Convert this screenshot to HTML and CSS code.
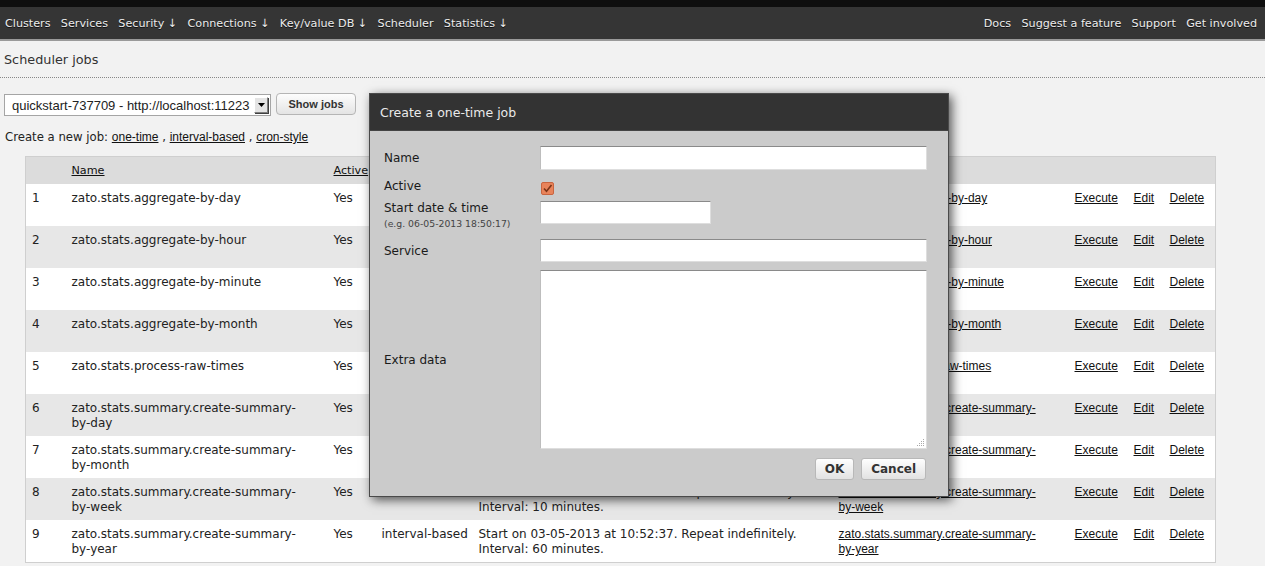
FILE: index.html
```html
<!DOCTYPE html>
<html>
<head>
<meta charset="utf-8">
<title>Scheduler jobs</title>
<link rel="stylesheet" href="styles.css">
</head>
<body>
<div class="topstrip"></div>
<nav class="nav">
  <ul class="nav-left">
    <li>Clusters</li>
    <li>Services</li>
    <li>Security ↓</li>
    <li>Connections ↓</li>
    <li>Key/value DB ↓</li>
    <li>Scheduler</li>
    <li>Statistics ↓</li>
  </ul>
  <ul class="nav-right">
    <li>Docs</li>
    <li>Suggest a feature</li>
    <li>Support</li>
    <li>Get involved</li>
  </ul>
</nav>
<header class="page-title">Scheduler jobs</header>
<main class="content">
  <div class="cluster-row">
    <div class="select">
      <span class="select-text">quickstart-737709 - http://localhost:11223</span>
      <span class="select-arrow"><svg width="7" height="4" viewBox="0 0 7 4"><path d="M0 0h7L3.5 4z" fill="#000"/></svg></span>
    </div>
    <button class="btn-show">Show jobs</button>
  </div>
  <p class="create">Create a new job: <a href="#">one-time</a> , <a href="#">interval-based</a> , <a href="#">cron-style</a></p>
  <table class="jobs">
    <colgroup>
      <col class="c-idx"><col class="c-name"><col class="c-active"><col class="c-type"><col class="c-def"><col class="c-svc"><col class="c-exe"><col class="c-edit"><col class="c-del">
    </colgroup>
    <thead>
      <tr><th></th><th class="t-name"><a href="#">Name</a></th><th><a href="#">Active</a></th><th class="t-type"><a href="#">Job type</a></th><th>Definition</th><th class="t-svc"><a href="#">Service</a></th><th></th><th></th><th></th></tr>
    </thead>
    <tbody>
      <tr><td>1</td><td class="t-name">zato.stats.aggregate-by-day</td><td>Yes</td><td class="t-type">interval-based</td><td>Start on 03-05-2013 at 10:52:37. Repeat indefinitely.<br>Interval: 60 minutes.</td><td class="t-svc"><a class="lk" href="#">zato.stats.aggregate-by-day</a></td><td><a class="lk" href="#">Execute</a></td><td><a class="lk" href="#">Edit</a></td><td><a class="lk" href="#">Delete</a></td></tr>
      <tr><td>2</td><td class="t-name">zato.stats.aggregate-by-hour</td><td>Yes</td><td class="t-type">interval-based</td><td>Start on 03-05-2013 at 10:52:37. Repeat indefinitely.<br>Interval: 10 minutes.</td><td class="t-svc"><a class="lk" href="#">zato.stats.aggregate-by-hour</a></td><td><a class="lk" href="#">Execute</a></td><td><a class="lk" href="#">Edit</a></td><td><a class="lk" href="#">Delete</a></td></tr>
      <tr><td>3</td><td class="t-name">zato.stats.aggregate-by-minute</td><td>Yes</td><td class="t-type">interval-based</td><td>Start on 03-05-2013 at 10:52:37. Repeat indefinitely.<br>Interval: 1 minutes.</td><td class="t-svc"><a class="lk" href="#">zato.stats.aggregate-by-minute</a></td><td><a class="lk" href="#">Execute</a></td><td><a class="lk" href="#">Edit</a></td><td><a class="lk" href="#">Delete</a></td></tr>
      <tr><td>4</td><td class="t-name">zato.stats.aggregate-by-month</td><td>Yes</td><td class="t-type">interval-based</td><td>Start on 03-05-2013 at 10:52:37. Repeat indefinitely.<br>Interval: 60 minutes.</td><td class="t-svc"><a class="lk" href="#">zato.stats.aggregate-by-month</a></td><td><a class="lk" href="#">Execute</a></td><td><a class="lk" href="#">Edit</a></td><td><a class="lk" href="#">Delete</a></td></tr>
      <tr><td>5</td><td class="t-name">zato.stats.process-raw-times</td><td>Yes</td><td class="t-type">interval-based</td><td>Start on 03-05-2013 at 10:52:37. Repeat indefinitely.<br>Interval: 90 seconds.</td><td class="t-svc"><a class="lk" href="#">zato.stats.process-raw-times</a></td><td><a class="lk" href="#">Execute</a></td><td><a class="lk" href="#">Edit</a></td><td><a class="lk" href="#">Delete</a></td></tr>
      <tr><td>6</td><td class="t-name">zato.stats.summary.create-summary-by-day</td><td>Yes</td><td class="t-type">interval-based</td><td>Start on 03-05-2013 at 10:52:37. Repeat indefinitely.<br>Interval: 10 minutes.</td><td class="t-svc"><a class="lk" href="#">zato.stats.summary.create-summary-by-day</a></td><td><a class="lk" href="#">Execute</a></td><td><a class="lk" href="#">Edit</a></td><td><a class="lk" href="#">Delete</a></td></tr>
      <tr><td>7</td><td class="t-name">zato.stats.summary.create-summary-by-month</td><td>Yes</td><td class="t-type">interval-based</td><td>Start on 03-05-2013 at 10:52:37. Repeat indefinitely.<br>Interval: 60 minutes.</td><td class="t-svc"><a class="lk" href="#">zato.stats.summary.create-summary-by-month</a></td><td><a class="lk" href="#">Execute</a></td><td><a class="lk" href="#">Edit</a></td><td><a class="lk" href="#">Delete</a></td></tr>
      <tr><td>8</td><td class="t-name">zato.stats.summary.create-summary-by-week</td><td>Yes</td><td class="t-type">interval-based</td><td>Start on 03-05-2013 at 10:52:37. Repeat indefinitely.<br>Interval: 10 minutes.</td><td class="t-svc"><a class="lk" href="#">zato.stats.summary.create-summary-by-week</a></td><td><a class="lk" href="#">Execute</a></td><td><a class="lk" href="#">Edit</a></td><td><a class="lk" href="#">Delete</a></td></tr>
      <tr><td>9</td><td class="t-name">zato.stats.summary.create-summary-by-year</td><td>Yes</td><td class="t-type">interval-based</td><td>Start on 03-05-2013 at 10:52:37. Repeat indefinitely.<br>Interval: 60 minutes.</td><td class="t-svc"><a class="lk" href="#">zato.stats.summary.create-summary-by-year</a></td><td><a class="lk" href="#">Execute</a></td><td><a class="lk" href="#">Edit</a></td><td><a class="lk" href="#">Delete</a></td></tr>
    </tbody>
  </table>
</main>

<div class="dialog">
  <div class="dialog-title">Create a one-time job</div>
  <div class="dialog-body">
    <div class="frow r-name">
      <label class="flabel">Name</label>
      <input class="inp wide" type="text">
    </div>
    <div class="frow r-active">
      <label class="flabel">Active</label>
      <span class="check"><svg width="13" height="13" viewBox="0 0 13 13"><rect x="0.5" y="0.5" width="12" height="12" rx="1.5" fill="#e8835a" stroke="#c8643f"/><path d="M3 6.5l2.5 2.8L10.5 3" fill="none" stroke="#7a3418" stroke-width="1.6"/></svg></span>
    </div>
    <div class="frow r-start">
      <label class="flabel">Start date &amp; time<span class="hint">(e.g. 06-05-2013 18:50:17)</span></label>
      <input class="inp short" type="text">
    </div>
    <div class="frow r-service">
      <label class="flabel">Service</label>
      <input class="inp wide" type="text">
    </div>
    <div class="frow r-extra">
      <label class="flabel">Extra data</label>
      <div class="ta-wrap">
        <textarea class="ta"></textarea>
        <svg class="grip" width="9" height="9" viewBox="0 0 9 9"><g fill="#aaa"><rect x="7" y="1" width="1" height="1"/><rect x="5" y="3" width="1" height="1"/><rect x="7" y="3" width="1" height="1"/><rect x="3" y="5" width="1" height="1"/><rect x="5" y="5" width="1" height="1"/><rect x="7" y="5" width="1" height="1"/><rect x="1" y="7" width="1" height="1"/><rect x="3" y="7" width="1" height="1"/><rect x="5" y="7" width="1" height="1"/><rect x="7" y="7" width="1" height="1"/></g></svg>
      </div>
    </div>
    <div class="buttons">
      <button class="dbtn">OK</button>
      <button class="dbtn">Cancel</button>
    </div>
  </div>
</div>
</body>
</html>
```

FILE: styles.css
```css
html, body {
  margin: 0;
  padding: 0;
}
body {
  background: #f2f2f2;
  font-family: "DejaVu Sans", Verdana, sans-serif;
  color: #222;
  position: relative;
  min-height: 566px;
}
.topstrip {
  height: 7px;
  background: #0e0e0e;
}
.nav {
  height: 32px;
  background: #353535;
  border-bottom: 2px solid #9a9a9a;
  display: flex;
  justify-content: space-between;
  align-items: center;
  padding: 0 8px 0 5px;
  font-size: 11.2px;
  color: #ececec;
  text-shadow: 0 1px 0 #111;
}
.nav ul {
  list-style: none;
  margin: 0;
  padding: 0;
  display: flex;
  gap: 10.3px;
}
.page-title {
  font-size: 12.8px;
  line-height: 16px;
  color: #333;
  padding: 11px 4px 9px;
  border-bottom: 1px dotted #888;
}
.content {
  padding: 15px 0 0 4px;
}
.cluster-row {
  display: flex;
  align-items: center;
  gap: 4px;
  height: 23px;
}
.select {
  width: 257px;
  height: 20px;
  border: 1px solid #a5a5a5;
  background: #fff;
  display: flex;
  align-items: center;
  justify-content: space-between;
  font-family: "Liberation Sans", Arial, sans-serif;
  font-size: 13px;
  padding: 0 1px 0 7px;
  box-sizing: content-box;
  margin-top: 1px;
}
.select-text {
  white-space: nowrap;
}
.select-arrow {
  width: 12px;
  height: 14px;
  background: #e4e4e4;
  border: 1px solid;
  border-color: #fff #808080 #808080 #fff;
  box-shadow: 1px 1px 0 #404040;
  display: flex;
  align-items: center;
  justify-content: center;
  margin-right: 1px;
  flex: none;
}
.btn-show {
  width: 80px;
  height: 22px;
  font-family: "Liberation Sans", Arial, sans-serif;
  font-weight: bold;
  font-size: 11px;
  color: #333;
  border: 1px solid #b5b5b5;
  border-radius: 4px;
  background: linear-gradient(#fdfdfd, #e4e4e4);
  padding: 0;
  margin-left: 1px;
  align-self: flex-start;
}
.create {
  margin: 14px 0 0 1px;
  font-size: 11.7px;
  line-height: 14px;
  color: #222;
}
.create a {
  font-family: "Liberation Sans", Arial, sans-serif;
  font-size: 12px;
  color: #111;
}
.jobs {
  margin: 12px 0 0 21px;
  width: 1190px;
  table-layout: fixed;
  border-collapse: collapse;
  border: 1px solid #cfcfcf;
  font-size: 12px;
  line-height: 15px;
}
.c-idx { width: 40px; }
.c-name { width: 262px; }
.c-active { width: 48px; }
.c-type { width: 97px; }
.c-def { width: 360px; }
.c-svc { width: 236px; }
.c-exe { width: 59px; }
.c-edit { width: 36px; }
.c-del { width: 52px; }
.jobs th {
  background: #dcdcdc;
  text-align: left;
  font-weight: normal;
  font-size: 11.2px;
  padding: 6px 6px 6px;
  height: 15px;
}
.jobs th a {
  color: #111;
}
.jobs td {
  vertical-align: top;
  padding: 7px 6px 5px;
  height: 30px;
  color: #222;
}
.jobs .t-name { padding-right: 30px; }
.jobs .t-type { padding-right: 0; }
.jobs .t-svc { padding-right: 24px; }
.jobs tbody tr:nth-child(odd) td {
  background: #fff;
}
.jobs tbody tr:nth-child(even) td {
  background: #e7e7e7;
}
.lk {
  font-family: "Liberation Sans", Arial, sans-serif;
  font-size: 12px;
  color: #111;
}

/* dialog */
.dialog {
  position: absolute;
  left: 369px;
  top: 93px;
  width: 578px;
  border: 1px solid #4a4a4a;
  background: #cbcbcb;
  box-shadow: 3px 3px 10px rgba(0, 0, 0, 0.65);
}
.dialog-title {
  height: 37px;
  background: #333;
  color: #eaeaea;
  font-size: 12.5px;
  line-height: 38px;
  padding-left: 10px;
  border-bottom: 1px solid #444;
  box-sizing: border-box;
}
.dialog-body {
  padding: 15px 21px 16px 14px;
}
.frow {
  display: flex;
  align-items: center;
}
.flabel {
  width: 156px;
  flex: none;
  font-size: 12px;
  line-height: 14px;
  color: #1a1a1a;
}
.r-name { margin-bottom: 7px; }
.r-active { height: 18px; margin-bottom: 6px; }
.r-start { align-items: flex-start; height: 31px; margin-bottom: 7px; }
.r-service { margin-bottom: 8px; }
.r-extra { margin-bottom: 9px; }
.hint {
  display: block;
  font-size: 9.3px;
  line-height: 14px;
  margin-top: 2px;
  color: #444;
}
.check {
  display: flex;
  margin-left: 1px;
  margin-top: 4px;
}
.inp {
  height: 24px;
  box-sizing: border-box;
  border: 1px solid #dedede;
  border-top-color: #8a8a8a;
  border-left-color: #bdbdbd;
  background: #fff;
  padding: 0 3px;
  margin: 0;
}
.wide { width: 387px; }
.short { width: 171px; height: 23px; }
.r-service .inp { height: 23px; }
.ta-wrap {
  position: relative;
  width: 387px;
  height: 179px;
}
.ta {
  display: block;
  width: 387px;
  height: 179px;
  box-sizing: border-box;
  border: 1px solid #dedede;
  border-top-color: #8a8a8a;
  border-left-color: #bdbdbd;
  background: #fff;
  resize: none;
  margin: 0;
}
.grip {
  position: absolute;
  right: 2px;
  bottom: 2px;
}
.buttons {
  display: flex;
  justify-content: flex-end;
  gap: 7px;
  padding-right: 1px;
}
.dbtn {
  height: 22px;
  padding: 0 9px;
  font-family: "DejaVu Sans", Verdana, sans-serif;
  font-weight: bold;
  font-size: 12px;
  color: #333;
  border: 1px solid #b8b8b8;
  border-radius: 3px;
  background: linear-gradient(#fefefe, #e2e2e2);
}
```
